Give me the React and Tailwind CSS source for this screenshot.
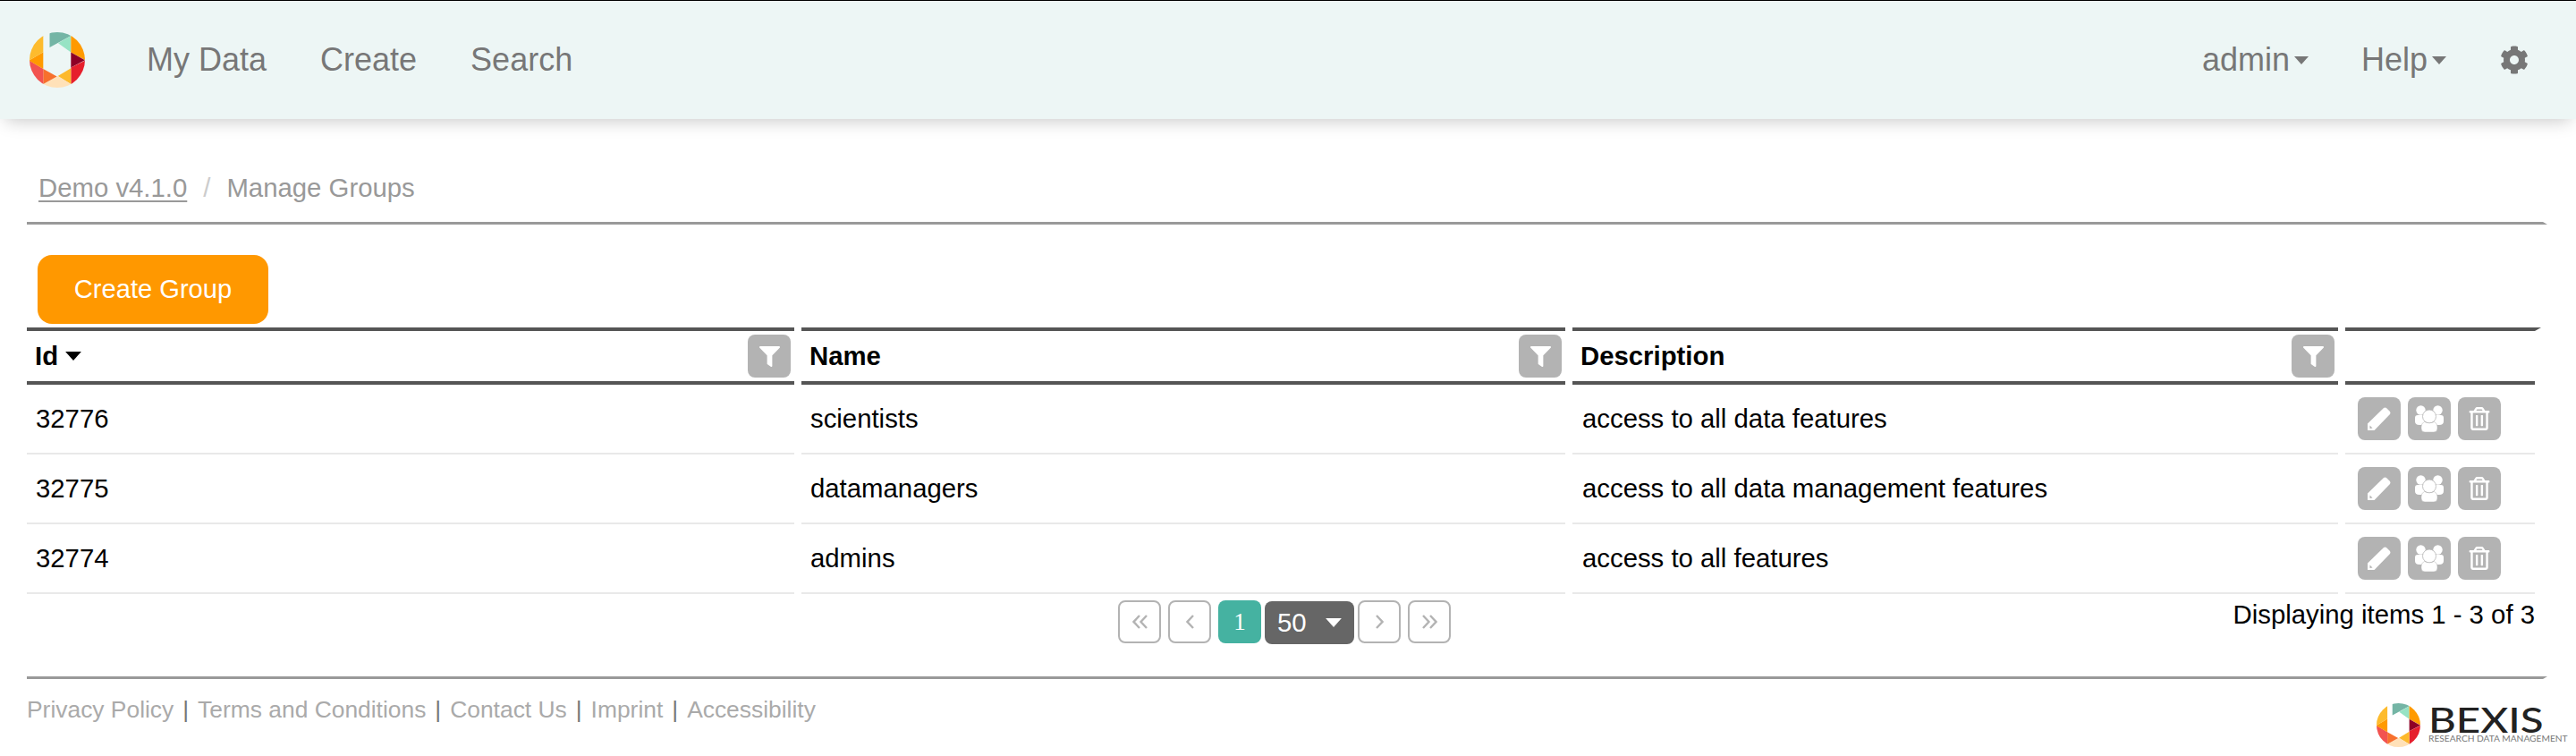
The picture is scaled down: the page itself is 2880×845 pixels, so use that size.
import { FaCog, FaFilter, FaRegTrashAlt } from "react-icons/fa";

/* ── BEXIS hexagon mark ── */
const Mark = ({ className, id }) => (
  <svg viewBox="72 50 182 182" className={className} aria-hidden="true">
    <defs>
      <clipPath id={id}>
        <circle cx="163" cy="141" r="91" />
      </clipPath>
    </defs>
    <g clipPath={`url(#${id})`}>
      <polygon points="138,40 215,40 208,62 138,100" fill="#74b5a5" />
      <polygon points="208,62 166,86 208,116" fill="#97e3c4" />
      <polygon points="208,50 260,50 260,144 208,116" fill="#ff9a00" />
      <polygon points="208,116 254,142 208,166" fill="#8e0026" />
      <polygon points="260,140 260,232 208,232 208,166" fill="#e61f2c" />
      <polygon points="208,168 165,194 208,220" fill="#fdb92c" />
      <polygon points="165,194 208,220 208,240 118,240 118,220" fill="#ffe1b8" />
      <polygon points="117,170 162,195 117,220" fill="#f7702d" />
      <polygon points="70,142 117,170 117,222 70,232" fill="#f25350" />
      <polygon points="117,115 70,143 117,170" fill="#ff9a00" />
      <polygon points="117,50 117,115 70,143 70,50" fill="#fdbb2d" />
    </g>
  </svg>
);

const Caret = ({ className }) => (
  <svg viewBox="0 0 16 9" className={className} aria-hidden="true">
    <path d="M0 0h16L8 9z" fill="currentColor" />
  </svg>
);

const Pencil = () => (
  <svg viewBox="0 0 26 26" className="w-[26px] h-[26px]" aria-hidden="true">
    <path d="M0 26V18.500L18 1q1.500-1 3 0l4 4q1 1.500 0 3L7.500 26z" fill="#fff" />
    <path d="M2.500 20.500l3 3-3 .5z" fill="#b3b3b3" />
  </svg>
);

const Users = () => (
  <svg viewBox="0 0 32 30" className="w-8 h-[30px]" aria-hidden="true">
    <circle cx="6.500" cy="5.500" r="5.200" fill="#fff" />
    <circle cx="25.500" cy="5.500" r="5.200" fill="#fff" />
    <path d="M0 14q0-3 3-3h7l2 11H5q-5 0-5-4zM32 14q0-3-3-3h-7l-2 11h7q5 0 5-4z" fill="#fff" />
    <circle cx="16" cy="12.500" r="7.500" fill="#fff" stroke="#b3b3b3" strokeWidth=".8" />
    <path d="M7 24q0-4 3.500-5.500 5.500 3 11 0Q25 20 25 24v2q0 4-4 4H11q-4 0-4-4z" fill="#fff" stroke="#b3b3b3" strokeWidth=".5" />
  </svg>
);

const IconBtn = ({ children }) => (
  <div className="w-12 h-12 rounded-lg bg-[#b3b3b3] flex items-center justify-center text-white shrink-0">
    {children}
  </div>
);

/* ── Pager arrows ── */
const PagerBtn = ({ d, w }) => (
  <div className="w-12 h-12 rounded-lg border-2 border-[#b3b3b3] flex items-center justify-center">
    <svg viewBox={`0 0 ${w} 16`} width={w} height="16" fill="none" stroke="#b3b3b3" strokeWidth="2.400" aria-hidden="true">
      <path d={d} />
    </svg>
  </div>
);

const HeadCell = ({ label, sorted }) => (
  <div className="h-14 border-t-4 border-b-4 border-[#555] flex items-center justify-between pl-[9px] pr-1 box-content">
    <span className="font-bold flex items-center gap-2">
      {label}
      {sorted && <Caret className="w-[18px] h-[10px] text-black" />}
    </span>
    <IconBtn><FaFilter size={23} /></IconBtn>
  </div>
);

const rows = [
  ["32776", "scientists", "access to all data features"],
  ["32775", "datamanagers", "access to all data management features"],
  ["32774", "admins", "access to all features"],
];

const footerLinks = ["Privacy Policy", "Terms and Conditions", "Contact Us", "Imprint", "Accessibility"];

export default function App() {
  return (
    <div className="w-[2880px] h-[845px] overflow-hidden bg-white text-black font-['Liberation_Sans',Arial,sans-serif] text-[29.33px]">
      {/* Nav */}
      <nav className="h-[133px] border-t border-black bg-[#edf6f5] flex items-center pl-[33px] pr-[53px] text-[36px] text-[#777] shadow-[0_8px_18px_-6px_rgba(0,0,0,0.22)] relative">
        <Mark id="navmark" className="w-[62px] h-[62px] mr-[69px]" />
        <div className="flex items-center gap-[60px]">
          <span>My Data</span>
          <span>Create</span>
          <span>Search</span>
        </div>
        <div className="ml-auto flex items-center">
          <span>admin</span>
          <Caret className="w-4 h-[9px] ml-[5px] mr-[59px]" />
          <span>Help</span>
          <Caret className="w-4 h-[9px] ml-[5px] mr-[60px]" />
          <FaCog size={32} />
        </div>
      </nav>

      {/* Breadcrumb */}
      <div className="ml-[30px] mr-8 h-[118px] border-b-[3px] border-r-[5px] border-b-[#999] border-r-transparent pl-[13px] pt-[55px] text-[#999]">
        <span className="underline underline-offset-4">Demo v4.1.0</span>
        <span className="text-[#ccc] mx-[18px]">/</span>
        <span>Manage Groups</span>
      </div>

      {/* Create button */}
      <button className="block ml-[42px] mt-[34px] w-[258px] h-[77px] rounded-2xl bg-[#ff9800] text-white text-[29.1px]">
        Create Group
      </button>

      {/* Table */}
      <div className="ml-[30px] mt-1 grid grid-cols-[858px_854px_856px_212px] gap-x-2">
        <HeadCell label="Id" sorted />
        <HeadCell label="Name" />
        <HeadCell label="Description" />
        <div className="h-[64px] border-b-4 border-[#555] box-border">
          <div className="h-0 -mr-[7px] border-t-4 border-r-[7px] border-t-[#555] border-r-transparent" />
        </div>

        {rows.map((r) => (
          <div key={r[0]} className="contents">
            <div className="h-[78px] border-b-2 border-[#e9e9e9] flex items-center pl-[10px]">{r[0]}</div>
            <div className="h-[78px] border-b-2 border-[#e9e9e9] flex items-center pl-[10px]">{r[1]}</div>
            <div className="h-[78px] border-b-2 border-[#e9e9e9] flex items-center pl-[11px]">{r[2]}</div>
            <div className="h-[78px] border-b-2 border-[#e9e9e9] flex items-center gap-2 pl-[14px]">
              <IconBtn><Pencil /></IconBtn>
              <IconBtn><Users /></IconBtn>
              <IconBtn><FaRegTrashAlt size={26} /></IconBtn>
            </div>
          </div>
        ))}
      </div>

      {/* Pager */}
      <div className="ml-[30px] w-[2804px] h-[92px] relative flex justify-center pt-[7px] pl-[8px]">
        <div className="flex items-start">
          <PagerBtn w={17} d="M8 1 1.500 8 8 15M16 1 9.500 8 16 15" />
          <div className="w-2" />
          <PagerBtn w={9} d="M8 1 1.500 8 8 15" />
          <div className="w-2" />
          <div className="w-12 h-12 rounded-lg bg-[#45b2a1] text-white flex items-center justify-center font-['Liberation_Serif',serif] text-[27px]">1</div>
          <div className="w-[100px] h-12 mt-px ml-1 mr-1 rounded-lg bg-[#666] text-white flex items-center justify-between pl-[14px] pr-[14px]">
            <span>50</span>
            <Caret className="w-[18px] h-[10px]" />
          </div>
          <PagerBtn w={9} d="M1 1 7.500 8 1 15" />
          <div className="w-2" />
          <PagerBtn w={17} d="M1 1 7.500 8 1 15M9 1 15.500 8 9 15" />
        </div>
        <span className="absolute right-0 top-px">Displaying items 1 - 3 of 3</span>
      </div>

      {/* Footer */}
      <div className="ml-[30px] mr-8 h-0 border-t-[3px] border-r-[5px] border-t-[#999] border-r-transparent" />
      <div className="ml-[30px] mr-8 flex justify-between">
        <div className="pt-[15px] text-[26.4px] text-[#aaa]">
          {footerLinks.map((l, i) => (
            <span key={l}>
              {i > 0 && <span className="text-[#777] mx-[10px]">|</span>}
              {l}
            </span>
          ))}
        </div>
        <div className="flex items-start pt-[27px] pr-[5px]">
          <Mark id="footmark" className="w-[49px] h-[49px] mr-[9px]" />
          <div className="w-[128px] flex flex-col pt-[3px] font-['Lato',sans-serif]">
            <span className="text-[38px] leading-[30px] h-[30px] font-medium text-[#222] scale-x-[1.25] origin-left">BEXIS</span>
            <span className="text-[10.2px] leading-[12px] text-[#777] whitespace-nowrap">RESEARCH DATA MANAGEMENT</span>
          </div>
        </div>
      </div>
    </div>
  );
}
